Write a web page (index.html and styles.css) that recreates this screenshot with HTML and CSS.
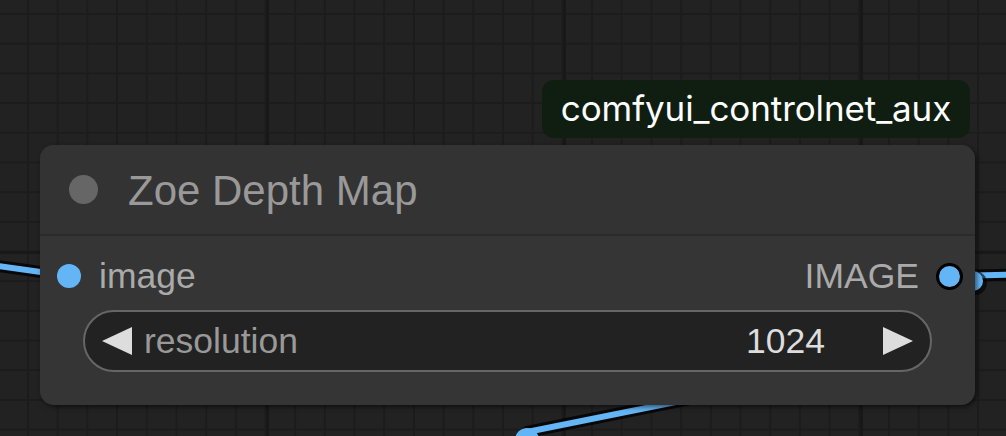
FILE: index.html
```html
<!DOCTYPE html>
<html>
<head>
<meta charset="utf-8">
<link rel="stylesheet" href="styles.css">
</head>
<body>
<div class="canvas">
  <svg class="wires" width="1006" height="436" viewBox="0 0 1006 436">
    <g fill="none" stroke-linecap="round">
      <path class="wire-edge" d="M -40 260.5 L 69 276"/>
      <path class="wire" d="M -40 260.5 L 69 276"/>
      <path class="wire-edge" d="M 949 276 C 975 276 985 275 1040 274"/>
      <path class="wire" d="M 949 276 C 975 276 985 275 1040 274"/>
      <path class="wire-edge" d="M 527 432 L 780 381"/>
      <path class="wire" d="M 527 432 L 780 381"/>
    </g>
    <circle class="wire-blob-edge" cx="975" cy="283" r="12"/>
    <circle class="wire-blob" cx="973" cy="281" r="10"/>
    <circle class="wire-end" cx="527" cy="440" r="12"/>
  </svg>

  <div class="badge">comfyui_controlnet_aux</div>

  <div class="node">
    <div class="node-title">
      <span class="title-dot"></span>
      <span class="title-text">Zoe Depth Map</span>
    </div>
    <div class="node-sep"></div>
    <div class="node-body">
      <div class="slot-row">
        <div class="slot slot-in">
          <span class="dot-in"></span>
          <span class="slot-label">image</span>
        </div>
        <div class="slot slot-out">
          <span class="slot-label">IMAGE</span>
          <span class="dot-out"></span>
        </div>
      </div>
      <div class="widget">
        <span class="arrow arrow-left"></span>
        <span class="w-name">resolution</span>
        <span class="w-value">1024</span>
        <span class="arrow arrow-right"></span>
      </div>
    </div>
  </div>
</div>
</body>
</html>
```

FILE: styles.css
```css
html, body {
  margin: 0;
  padding: 0;
  background: #222222;
  overflow: hidden;
}

.canvas {
  position: relative;
  width: 1006px;
  height: 436px;
  overflow: hidden;
  background-color: #222222;
  background-image:
    linear-gradient(to right, #181818 0, #181818 3px, transparent 3px),
    linear-gradient(to bottom, #181818 0, #181818 3px, transparent 3px),
    linear-gradient(to right, #1c1c1c 0, #1c1c1c 2px, transparent 2px),
    linear-gradient(to bottom, #1c1c1c 0, #1c1c1c 2px, transparent 2px);
  background-size: 297px 100%, 100% 297px, 29.7px 100%, 100% 29.7px;
  background-position: 266px 0, 0 251px, 27px 0, 0 13px;
  font-family: "Liberation Sans", Arial, sans-serif;
}

.wires {
  position: absolute;
  left: 0;
  top: 0;
}

.wire-edge {
  stroke: rgba(0, 0, 0, 0.75);
  stroke-width: 12;
}

.wire {
  stroke: #64b5f6;
  stroke-width: 6;
}

.wire-blob-edge { fill: rgba(0, 0, 0, 0.6); }
.wire-blob { fill: #64b5f6; }
.wire-end { fill: #64b5f6; }

.badge {
  position: absolute;
  left: 542px;
  top: 80px;
  width: 428px;
  height: 58px;
  box-sizing: border-box;
  border-radius: 12px;
  background: #101e12;
  color: #ffffff;
  font-family: Inter, "Noto Sans", sans-serif;
  font-size: 35px;
  letter-spacing: -0.1px;
  display: flex;
  align-items: center;
  justify-content: center;
  padding-bottom: 2px;
}

.node {
  position: absolute;
  left: 40px;
  top: 145px;
  width: 935px;
  height: 260px;
  border-radius: 14px;
  background: #353535;
  box-shadow: 2px 2px 5px rgba(0, 0, 0, 0.55);
  display: flex;
  flex-direction: column;
  overflow: hidden;
}

.node-title {
  height: 89px;
  background: #333333;
  display: flex;
  align-items: center;
  padding-left: 29px;
  gap: 30px;
}

.title-dot {
  width: 29px;
  height: 29px;
  border-radius: 50%;
  background: #666666;
  flex: none;
}

.title-text {
  color: #999999;
  font-size: 42px;
  line-height: 1;
  padding-top: 3px;
}

.node-sep {
  height: 2px;
  background: #2b2b2b;
}

.node-body {
  flex: 1;
  display: flex;
  flex-direction: column;
  padding-top: 22px;
}

.slot-row {
  height: 36px;
  display: flex;
  align-items: center;
  justify-content: space-between;
  padding: 0 12px 0 17px;
}

.slot {
  display: flex;
  align-items: center;
}

.slot-in { gap: 18px; }
.slot-out { gap: 17px; }

.dot-in {
  width: 24px;
  height: 24px;
  border-radius: 50%;
  background: #64b5f6;
}

.dot-out {
  width: 21px;
  height: 21px;
  border-radius: 50%;
  background: #64b5f6;
  border: 3px solid #000000;
}

.slot-label {
  color: #aaaaaa;
  font-size: 35.5px;
  line-height: 1;
  padding-top: 2px;
}

.widget {
  margin: 16px 43px 0;
  height: 62px;
  box-sizing: border-box;
  border: 2px solid #666666;
  border-radius: 31px;
  background: #222222;
  display: flex;
  align-items: center;
  padding: 0 17px;
  font-size: 35.5px;
}

.arrow {
  width: 0;
  height: 0;
  border-top: 14px solid transparent;
  border-bottom: 14px solid transparent;
  flex: none;
}

.arrow-left {
  border-right: 30px solid #dddddd;
}

.arrow-right {
  border-left: 30px solid #dddddd;
}

.w-name {
  color: #999999;
  margin-left: 12px;
  flex: 1;
  line-height: 1;
  padding-top: 2px;
}

.w-value {
  color: #dddddd;
  margin-right: 58px;
  line-height: 1;
  padding-top: 2px;
}
```
